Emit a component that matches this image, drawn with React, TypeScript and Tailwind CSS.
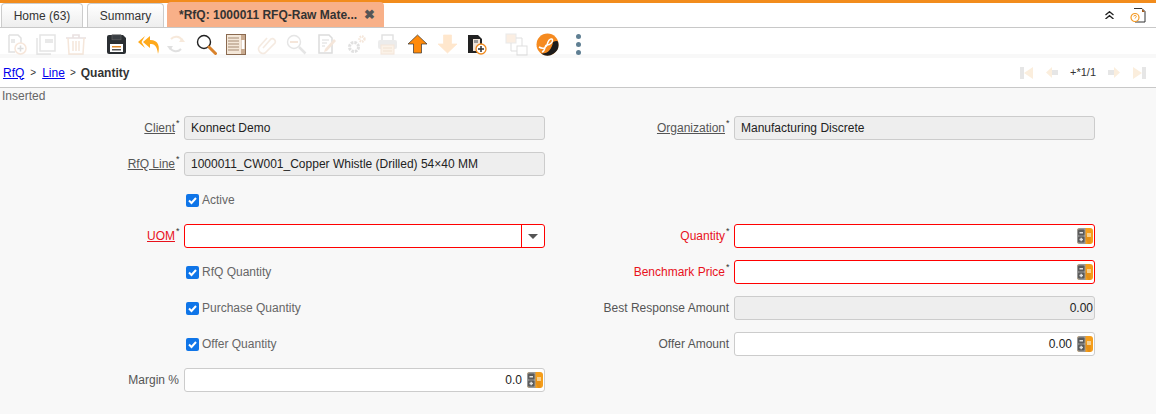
import type { ReactNode } from "react";

const Save = () => (
  <svg width="21" height="21" viewBox="0 0 21 21">
    <path d="M1 3a2 2 0 0 1 2-2h14l3 3v14a2 2 0 0 1-2 2H3a2 2 0 0 1-2-2z" fill="#2b2f33" />
    <rect x="6" y="0.800" width="9" height="5" fill="#3a3f44" stroke="#666" strokeWidth="0.600" />
    <rect x="4" y="10" width="13" height="8" fill="#fff" />
    <rect x="6" y="12" width="9" height="1.500" fill="#e08a2a" />
    <rect x="6" y="15" width="9" height="1.500" fill="#555" />
  </svg>
);

const Undo = () => (
  <svg width="23" height="19" viewBox="0 0 23 19">
    <path d="M8 1 1 7l7 6-3.500-6z" fill="#ffa91a" />
    <path d="M13 1 6 7l7 6V9c4 0 7 1 8 10 2-7 1-14-8-14z" fill="#ffa91a" />
  </svg>
);

const Refresh = () => (
  <svg width="20" height="20" viewBox="0 0 20 20" fill="none" className="opacity-30">
    <path d="M5 5a7 7 0 0 1 11 1" stroke="#e8b98a" strokeWidth="2" />
    <path d="M15 15a7 7 0 0 1-11-1" stroke="#9a9a9a" strokeWidth="2" />
    <path d="M13 8h6l-3-4z" fill="#e8b98a" />
    <path d="M1 12h6l-3 4z" fill="#9a9a9a" />
  </svg>
);

const Find = () => (
  <svg width="21" height="21" viewBox="0 0 21 21" fill="none">
    <circle cx="8" cy="8" r="6.500" stroke="#222" strokeWidth="1.400" fill="#fff" />
    <path d="M13 13l6.500 6.500" stroke="#d9822b" strokeWidth="3" strokeLinecap="round" />
  </svg>
);

const Notes = () => (
  <svg width="20" height="21" viewBox="0 0 20 21">
    <rect x="0.500" y="0.500" width="19" height="20" fill="#f4e7d8" stroke="#8a6a50" />
    <path d="M2 4h11M2 7h11M2 10h11M2 13h11M2 16h11" stroke="#a58a72" />
    <rect x="15" y="1" width="4" height="19" fill="#c9ab90" />
    <rect x="15.500" y="6" width="3" height="9" fill="#fff" />
  </svg>
);

const Paperclip = () => (
  <svg width="21" height="21" viewBox="0 0 21 21" fill="none" className="opacity-25">
    <path d="M7 14l8-9a3 3 0 0 1 4 4L9 19a4.500 4.500 0 0 1-6-6l8-9" stroke="#d9b08a" strokeWidth="1.600" />
  </svg>
);

const ZoomOff = () => (
  <svg width="21" height="21" viewBox="0 0 21 21" fill="none" className="opacity-25">
    <circle cx="8" cy="8" r="6.500" stroke="#999" strokeWidth="1.400" />
    <path d="M4 8h8" stroke="#d9a070" strokeWidth="2" />
    <path d="M13 13l6.500 6.500" stroke="#999" strokeWidth="2.500" />
  </svg>
);

const Edit = () => (
  <svg width="21" height="21" viewBox="0 0 21 21" fill="none" className="opacity-25">
    <path d="M3 1h10l3 3v15H3z" stroke="#777" strokeWidth="1.500" />
    <path d="M6 6h7M6 9h5M6 12h3" stroke="#777" />
    <path d="M9 15l9-10 2 2-9 10-3 1z" fill="#d9a070" />
  </svg>
);

const Gear = () => (
  <svg width="21" height="21" viewBox="0 0 21 21" fill="none" className="opacity-25">
    <circle cx="8" cy="13" r="4.500" stroke="#888" strokeWidth="3" strokeDasharray="2.500 1" />
    <circle cx="16" cy="5" r="2.500" stroke="#d9a070" strokeWidth="2.400" strokeDasharray="1.500 0.800" />
  </svg>
);

const Printer = () => (
  <svg width="21" height="21" viewBox="0 0 21 21" className="opacity-25">
    <rect x="5" y="1" width="11" height="6" fill="none" stroke="#888" strokeWidth="1.400" />
    <rect x="1" y="6" width="19" height="9" rx="2" fill="#b5b5b5" />
    <rect x="4" y="11" width="13" height="9" fill="#f3cda5" stroke="#d9a070" />
    <path d="M6 14h9M6 17h9" stroke="#c98d55" />
  </svg>
);

const ArrowUp = ({ off }: { off?: boolean }) => (
  <svg width="21" height="20" viewBox="0 0 21 20" className={off ? "opacity-20 rotate-180" : ""}>
    <path d="M10.500 1 1 10h5.500v9h8v-9H20z" fill="#ff8a0a" stroke={off ? "#ff8a0a" : "#333"} strokeWidth="0.700" />
  </svg>
);

const NewDoc = () => (
  <svg width="21" height="21" viewBox="0 0 21 21" fill="none" className="opacity-25">
    <path d="M3 1h9l3 3v5M3 1v17h6" stroke="#888" strokeWidth="1.500" />
    <path d="M5 5h4v4H5z" fill="#aaa" />
    <circle cx="14.500" cy="14.500" r="5.500" stroke="#e0a070" strokeWidth="1.500" />
    <path d="M14.500 11.500v6M11.500 14.500h6" stroke="#777" strokeWidth="1.500" />
  </svg>
);

const Copy = () => (
  <svg width="21" height="21" viewBox="0 0 21 21" fill="none" className="opacity-25">
    <path d="M1 4v16h14" stroke="#999" strokeWidth="1.500" />
    <rect x="4" y="1" width="15" height="16" stroke="#999" strokeWidth="1.500" />
    <rect x="9" y="5" width="8" height="4" fill="#aaa" />
  </svg>
);

const Trash = () => (
  <svg width="20" height="21" viewBox="0 0 20 21" fill="none" className="opacity-25">
    <path d="M0 4h20M7 4V1h6v3" stroke="#a88" strokeWidth="1.600" />
    <path d="M2 4l1 16h14l1-16" stroke="#d9a070" strokeWidth="1.500" />
    <path d="M7 7v10M10 7v10M13 7v10" stroke="#d9a070" strokeWidth="1.500" />
  </svg>
);

const SaveNew = () => (
  <svg width="20" height="21" viewBox="0 0 20 21">
    <path d="M1 1h10l4 4v14H1z" fill="#222" />
    <path d="M6 5h7v12H6z" fill="#f1e4d8" />
    <rect x="7" y="6" width="4" height="3" fill="#999" />
    <circle cx="14" cy="15" r="5" fill="#fff" stroke="#f08a1d" strokeWidth="1.300" />
    <path d="M14 12v6M11 15h6" stroke="#333" strokeWidth="1.500" />
  </svg>
);

const Workflow = () => (
  <svg width="23" height="23" viewBox="0 0 23 23" fill="none" className="opacity-30">
    <rect x="1" y="1" width="10" height="9" fill="#f2c9a1" stroke="#bbb" />
    <rect x="12" y="13" width="10" height="9" stroke="#999" />
    <path d="M11 5h6v8M6 10v8h6" stroke="#999" />
  </svg>
);

const Logo = () => (
  <svg width="23" height="23" viewBox="0 0 23 23" fill="none">
    <circle cx="11.500" cy="11.500" r="11" fill="#f58a1f" />
    <path d="M22 8.500A11 11 0 0 1 5 20.500C12 21 16 16 17 9c2-1 4-1.500 5-.5z" fill="#1c1c1c" />
    <path d="M3 14c5 3 8 0 9-5 1-3 4-4 4.500-2S14 12 11 12s-1 6-5 7" stroke="#fff" strokeWidth="1.500" />
  </svg>
);

const Kebab = () => (
  <div className="flex flex-col gap-[3px]">
    <span className="w-[5px] h-[5px] rounded-full bg-[#5f7f93]" />
    <span className="w-[5px] h-[5px] rounded-full bg-[#5f7f93]" />
    <span className="w-[5px] h-[5px] rounded-full bg-[#5f7f93]" />
  </div>
);

const Collapse = () => (
  <svg width="9" height="8" viewBox="0 0 9 8" fill="none" stroke="#222" strokeWidth="1.300">
    <path d="M.5 4l4-3.300 4 3.300M.5 8l4-3.300 4 3.300" />
  </svg>
);

const HelpDoc = () => (
  <svg width="16" height="15" viewBox="0 0 16 15" fill="none">
    <path d="M4 .500h8l3 3v10.500H5" stroke="#333" />
    <path d="M12 1l3 3h-3z" fill="#a3591a" />
    <circle cx="5" cy="9.500" r="4" fill="#fff" stroke="#f59a23" strokeWidth="1.200" />
    <path d="M3.800 8.500c0-1.600 2.500-1.600 2.500 0 0 1-1.300 1-1.300 2" stroke="#f59a23" />
  </svg>
);

const Calc = () => (
  <svg width="16" height="16" viewBox="0 0 16 16" className="shrink-0">
    <rect width="16" height="16" rx="3" fill="#f59e1b" />
    <path d="M11 16 7.500 9l6-4.500V16z" fill="#d9820f" opacity="0.500" />
    <path d="M3 0h5.500v16H3a3 3 0 0 1-3-3V3a3 3 0 0 1 3-3z" fill="#999" />
    <rect x="1" y="1.500" width="6.500" height="6" rx="1" fill="#5a5a5a" />
    <rect x="1" y="8.500" width="6.500" height="6" rx="1" fill="#5a5a5a" />
    <path d="M2.500 4h3.500v1.400H2.500zM2.500 10.800H6v1.400H2.500zM3.500 9.800h1.400v3.400H3.500z" fill="#e2e2e2" />
    <rect x="10" y="5" width="4" height="4" fill="#f8cf8c" />
  </svg>
);

const NavFirst = ({ flip }: { flip?: boolean }) => (
  <svg width="13" height="12" viewBox="0 0 13 12" className={flip ? "rotate-180" : ""}>
    <rect width="4" height="12" fill="#e6e6e6" />
    <path d="M13 0v12L4 6z" fill="#fbeedd" />
  </svg>
);

const NavPrev = ({ flip }: { flip?: boolean }) => (
  <svg width="12" height="11" viewBox="0 0 12 11" className={flip ? "rotate-180" : ""}>
    <path d="M6 0v11L0 5.500z" fill="#fbeedd" />
    <rect x="6" y="3" width="6" height="5" fill="#e6e6e6" />
  </svg>
);

const Check = ({ label }: { label: string }) => (
  <label className="flex items-center gap-[3px] text-[#666] ml-[2px]">
    <span className="w-[13px] h-[13px] rounded-[2px] bg-[#0f75e8] flex items-center justify-center">
      <svg width="11" height="11" viewBox="0 0 11 11" fill="none">
        <path d="M2 5.500l2.500 2.500L9 3" stroke="#fff" strokeWidth="2" />
      </svg>
    </span>
    {label}
  </label>
);

type LabelProps = { text: string; link?: boolean; req?: boolean; mandatory?: boolean };

const Label = ({ text, link, req, mandatory }: LabelProps) => (
  <div className={`flex justify-end pr-[5px] ${mandatory ? "text-[#e8121c]" : "text-[#555]"}`}>
    <span className={link ? "underline" : ""}>{text}</span>
    {req && <span className="w-1 text-[9px] leading-none text-[#333] relative -top-px left-px">*</span>}
  </div>
);

const Input = ({ value, mandatory, calc, readOnly, combo, right }: {
  value?: string;
  mandatory?: boolean;
  calc?: boolean;
  readOnly?: boolean;
  combo?: boolean;
  right?: boolean;
}) => (
  <div
    className={`h-6 rounded-[3px] border flex items-center ${
      mandatory ? "border-[#f00]" : "border-[#ccc]"
    } ${readOnly ? "bg-[#eeeeee]" : "bg-white"} ${right ? "justify-end" : ""} ${calc ? "pr-[1px]" : ""}`}
  >
    <span className={`text-[#222] ${right ? "pr-[1px]" : "pl-[6px]"}`}>{value}</span>
    {calc && <span className="ml-[4px]"><Calc /></span>}
    {combo && (
      <span className="ml-auto w-[23px] h-full border-l border-[#f00] flex items-center justify-center">
        <span className="w-0 h-0 border-x-[5px] border-x-transparent border-t-[5px] border-t-[#555]" />
      </span>
    )}
  </div>
);

const Row = ({ children }: { children: ReactNode }) => (
  <div className="grid grid-cols-[184px_361px_189px_361px] items-center h-6 mb-3">{children}</div>
);

const Tool = ({ children, className = "" }: { children: ReactNode; className?: string }) => (
  <div className={`w-[30px] h-5 flex items-center justify-center ${className}`}>{children}</div>
);

export default function App() {
  return (
    <div className="w-[1156px] h-[414px] bg-[#f8f8f8] text-xs overflow-hidden font-['Liberation_Sans',Arial,sans-serif]">
      <div className="h-[3px] bg-[#f28c1c]" />
      <div className="h-[25px] bg-white border-b border-[#c8c8c8] flex items-end justify-between">
        <div className="flex items-end h-full">
          <div className="ml-[1px] w-[82px] h-[24px] rounded-t-[4px] border border-b-0 border-[#ccc] bg-gradient-to-b from-white to-[#eeeeee] flex items-center justify-center text-[#333]">Home (63)</div>
          <div className="ml-[4px] w-[77px] h-[24px] rounded-t-[4px] border border-b-0 border-[#ccc] bg-gradient-to-b from-white to-[#eeeeee] flex items-center justify-center text-[#333]">Summary</div>
          <div className="ml-[3px] w-[217px] h-[25px] rounded-t-[4px] bg-[#f8b088] flex items-center pl-[12px] font-bold text-[#333]">
            *RfQ: 1000011 RFQ-Raw Mate...
            <span className="ml-[7px] text-[#555] text-[13px] leading-none">✖</span>
          </div>
        </div>
        <div className="flex items-center h-full gap-[16px] pr-[10px]">
          <Collapse />
          <HelpDoc />
        </div>
      </div>

      <div className="h-[26px] bg-white flex items-end pl-[1px]">
        <Tool><NewDoc /></Tool>
        <Tool><Copy /></Tool>
        <Tool><Trash /></Tool>
        <Tool className="ml-[10px]"><Save /></Tool>
        <Tool className="ml-[2px] -mr-[2px]"><Undo /></Tool>
        <Tool><Refresh /></Tool>
        <Tool><Find /></Tool>
        <Tool><Notes /></Tool>
        <Tool><Paperclip /></Tool>
        <Tool><ZoomOff /></Tool>
        <Tool><Edit /></Tool>
        <Tool><Gear /></Tool>
        <Tool className="ml-[1px]"><Printer /></Tool>
        <Tool><ArrowUp /></Tool>
        <Tool><ArrowUp off /></Tool>
        <Tool><SaveNew /></Tool>
        <Tool className="ml-[9px]"><Workflow /></Tool>
        <Tool className="ml-[1px]"><Logo /></Tool>
        <Tool className="ml-[1px]"><Kebab /></Tool>
      </div>

      <div className="h-[4px] bg-[#f8f8f8]" />

      <div className="h-[30px] bg-white border-b border-[#c8c8c8] flex items-center justify-between pl-[3px] pr-[10px]">
        <div className="flex items-center text-[#333]">
          <a href="#" className="text-[#0000ee] underline">RfQ</a>
          <span className="mx-[6px] text-[10px]">&gt;</span>
          <a href="#" className="text-[#0000ee] underline">Line</a>
          <span className="mx-[5px] text-[10px]">&gt;</span>
          <span className="font-bold">Quantity</span>
        </div>
        <div className="flex items-center text-[11px] text-[#333]">
          <NavFirst />
          <span className="ml-[13px]"><NavPrev /></span>
          <span className="ml-[12px] mr-[12px]">+*1/1</span>
          <NavPrev flip />
          <span className="ml-[13px]"><NavFirst flip /></span>
        </div>
      </div>

      <div className="pl-[2px] h-[28px] text-[#666]">Inserted</div>

      <div>
        <Row>
          <Label text="Client" link req />
          <Input value="Konnect Demo" readOnly />
          <Label text="Organization" link req />
          <Input value="Manufacturing Discrete" readOnly />
        </Row>
        <Row>
          <Label text="RfQ Line" link req />
          <Input value="1000011_CW001_Copper Whistle (Drilled) 54×40 MM" readOnly />
        </Row>
        <Row>
          <div />
          <Check label="Active" />
        </Row>
        <Row>
          <Label text="UOM" link req mandatory />
          <Input mandatory combo />
          <Label text="Quantity" req mandatory />
          <Input mandatory calc right />
        </Row>
        <Row>
          <div />
          <Check label="RfQ Quantity" />
          <Label text="Benchmark Price" req mandatory />
          <Input mandatory calc right />
        </Row>
        <Row>
          <div />
          <Check label="Purchase Quantity" />
          <Label text="Best Response Amount" />
          <Input value="0.00" readOnly right />
        </Row>
        <Row>
          <div />
          <Check label="Offer Quantity" />
          <Label text="Offer Amount" />
          <Input value="0.00" calc right />
        </Row>
        <Row>
          <Label text="Margin %" />
          <Input value="0.0" calc right />
        </Row>
      </div>
    </div>
  );
}
